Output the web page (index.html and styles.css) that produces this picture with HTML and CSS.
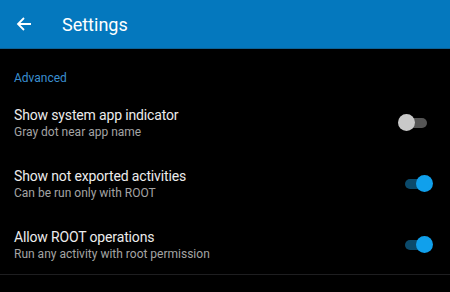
FILE: index.html
```html
<!DOCTYPE html>
<html>
<head>
<meta charset="utf-8">
<link rel="stylesheet" href="styles.css">
</head>
<body>
<header class="appbar">
  <svg class="back" width="16" height="16" viewBox="0 0 16 16"><path d="M15 8H2M8 2L2 8l6 6" fill="none" stroke="#fff" stroke-width="1.8"/></svg>
  <span class="title">Settings</span>
</header>
<main class="list">
  <div class="category">Advanced</div>
  <div class="row">
    <div class="texts">
      <div class="t">Show system app indicator</div>
      <div class="s">Gray dot near app name</div>
    </div>
    <div class="switch off"><span class="track"></span><span class="thumb"></span></div>
  </div>
  <div class="row">
    <div class="texts">
      <div class="t">Show not exported activities</div>
      <div class="s">Can be run only with ROOT</div>
    </div>
    <div class="switch on"><span class="track"></span><span class="thumb"></span></div>
  </div>
  <div class="row">
    <div class="texts">
      <div class="t">Allow ROOT operations</div>
      <div class="s">Run any activity with root permission</div>
    </div>
    <div class="switch on"><span class="track"></span><span class="thumb"></span></div>
  </div>
  <div class="divider"></div>
</main>
</body>
</html>
```
FILE: styles.css
```css
html, body { margin: 0; padding: 0; }
body {
  background: #000;
  font-family: Roboto, "Noto Sans", sans-serif;
  width: 450px;
  height: 292px;
  overflow: hidden;
}
.appbar {
  height: 48px;
  background: #0478be;
  border-bottom: 1px solid #0b6297;
  display: flex;
  align-items: center;
}
.back { margin-left: 16px; margin-right: 30px; }
.title { color: #fff; font-size: 18px; }
.list { display: flex; flex-direction: column; }
.category {
  height: 43px;
  box-sizing: border-box;
  padding: 21px 0 0 14px;
  color: #3a8fd0;
  font-size: 12px;
  line-height: 16px;
}
.row {
  height: 61px;
  display: flex;
  align-items: center;
  justify-content: space-between;
  padding: 0 16px 0 14px;
}
.t { color: #ececec; font-size: 14px; line-height: 17px; letter-spacing: -0.15px; }
.s { color: #a4a4a4; font-size: 12px; line-height: 14px; margin-top: 1px; }
.switch { position: relative; width: 36px; height: 18px; }
.track {
  position: absolute; left: 7px; top: 4px; width: 22px; height: 10px; border-radius: 5px;
}
.thumb {
  position: absolute; top: 0; width: 17px; height: 17px; border-radius: 50%;
}
.off .track { background: #555; }
.off .thumb { left: 0; background: #c9c9c9; }
.on .track { background: #0b4a6b; }
.on .thumb { left: 18px; background: #10a0ec; }
.divider { height: 1px; background: #1e1e20; margin-top: -1px; }
```
